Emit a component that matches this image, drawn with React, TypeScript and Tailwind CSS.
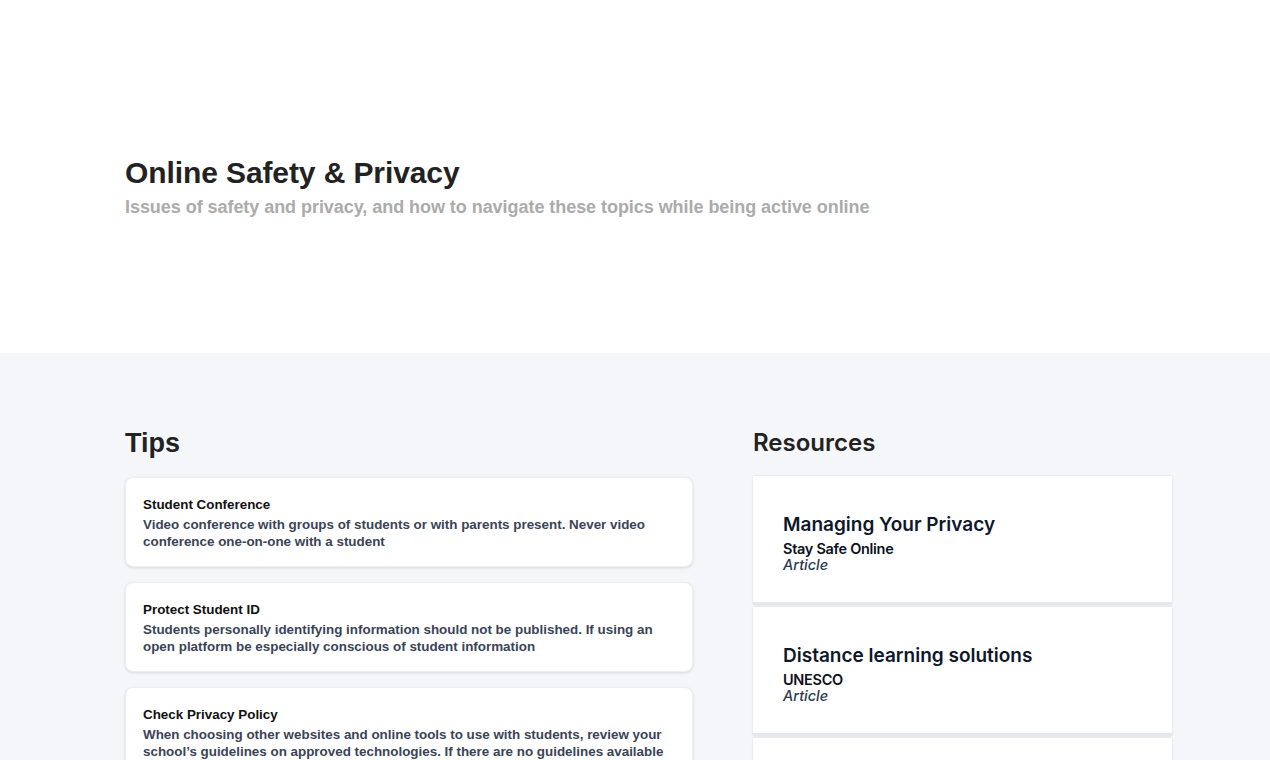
import React from "react";

const tips = [
  {
    title: "Student Conference",
    body: "Video conference with groups of students or with parents present. Never video conference one-on-one with a student",
  },
  {
    title: "Protect Student ID",
    body: "Students personally identifying information should not be published. If using an open platform be especially conscious of student information",
  },
  {
    title: "Check Privacy Policy",
    body: "When choosing other websites and online tools to use with students, review your school\u2019s guidelines on approved technologies. If there are no guidelines available please consult the privacy policy of the tool before using it with students",
  },
];

const resources = [
  { title: "Managing Your Privacy", source: "Stay Safe Online", kind: "Article" },
  { title: "Distance learning solutions", source: "UNESCO", kind: "Article" },
  { title: "Privacy Resources", source: "Common Sense", kind: "Article" },
];

export default function App() {
  return (
    <div className="min-h-screen bg-[#f5f6fa]" style={{ fontFamily: '"Liberation Sans", Arial, sans-serif' }}>
      <header className="bg-white h-[353px] px-[125px] pt-[156px]">
        <h1 className="text-[30px] leading-[34px] font-bold text-[#222222] tracking-[-0.1px]">Online Safety &amp; Privacy</h1>
        <p className="text-[18px] leading-[22px] font-bold text-[#ababab] mt-[6px] tracking-[-0.05px]">
          Issues of safety and privacy, and how to navigate these topics while being active online
        </p>
      </header>
      <main className="flex gap-[60px] px-[125px] pt-[74px] pb-10">
        <section className="w-[568px] shrink-0">
          <h2 className="text-[27px] leading-[30px] font-bold text-[#222222] mt-[1px]">Tips</h2>
          <div className="flex flex-col gap-[15px] mt-[19px]">
            {tips.map((t) => (
              <div
                key={t.title}
                className="bg-white rounded-[8px] border border-[#eceef2] shadow-[0_1px_3px_rgba(0,0,0,0.12)] px-[17px] pt-[18px] pb-[16px]"
              >
                <div className="text-[13.4px] leading-[18px] font-bold text-[#111111]">{t.title}</div>
                <div className="text-[13.4px] leading-[17px] font-bold text-[#3a4456] mt-[2px]">{t.body}</div>
              </div>
            ))}
          </div>
        </section>
        <section className="w-[419px] shrink-0" style={{ fontFamily: 'Inter, "Liberation Sans", sans-serif' }}>
          <h2 className="text-[24px] leading-[30px] font-semibold text-[#222222] mt-[1px]">Resources</h2>
          <div className="flex flex-col gap-[2px] mt-[18px]">
            {resources.map((r) => (
              <div
                key={r.title}
                className="bg-white h-[129px] border-b-[3px] border-[#e2e8f0] shadow-[0_0_2px_rgba(0,0,0,0.12)] px-[30px] pt-[36px]"
              >
                <div className="text-[19px] leading-[26px] font-semibold text-[#0f172a]">{r.title}</div>
                <div className="text-[14.5px] leading-[16px] font-semibold text-[#0b1120] mt-[3px] tracking-[-0.3px]">{r.source}</div>
                <div className="text-[14.5px] leading-[16px] italic font-medium text-[#2d3a4f]">{r.kind}</div>
              </div>
            ))}
          </div>
        </section>
      </main>
    </div>
  );
}
